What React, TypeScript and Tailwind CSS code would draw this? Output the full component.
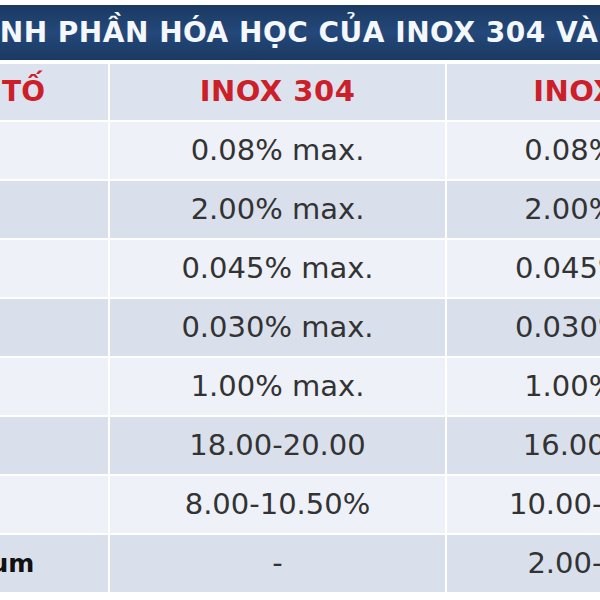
const rows = [
  { name: "Carbon", a: "0.08% max.", b: "0.08% max." },
  { name: "Mangan", a: "2.00% max.", b: "2.00% max." },
  { name: "Photpho", a: "0.045% max.", b: "0.045% max." },
  { name: "Lưu huỳnh", a: "0.030% max.", b: "0.030% max." },
  { name: "Silic", a: "1.00% max.", b: "1.00% max." },
  { name: "Crom", a: "18.00-20.00", b: "16.00-18.00" },
  { name: "Niken", a: "8.00-10.50%", b: "10.00-14.00%" },
  { name: "Molybdenum", a: "-", b: "2.00-3.00%" },
];

export default function App() {
  return (
    <div className="w-[600px] h-[600px] overflow-hidden bg-white font-['DejaVu_Sans',sans-serif]">
      <div className="pt-[5px] -ml-[160px] w-[935px]">
        <div className="h-[55px] flex items-center pl-[94px] bg-gradient-to-b from-[#1a3962] via-[#24487a] to-[#1a3962]">
          <span className="text-[#f4f7fc] font-bold text-[28px] whitespace-nowrap tracking-[0.5px]">
            THÀNH PHẦN HÓA HỌC CỦA INOX 304 VÀ 316
          </span>
        </div>
        <div className="h-[4px] bg-white" />
        <div className="grid grid-cols-[268px_337px_330px]">
          <div className="h-[58px] bg-[#dde3ee] border-b-2 border-white flex items-center justify-end pr-[63px] text-[28px] font-bold text-[#cc1f2a] whitespace-nowrap">
            NGUYÊN TỐ
          </div>
          <div className="h-[58px] bg-[#dde3ee] border-b-2 border-l-2 border-white flex items-center justify-center text-[29px] font-bold text-[#cc1f2a] tracking-[0.5px]">
            INOX 304
          </div>
          <div className="h-[58px] bg-[#dde3ee] border-b-2 border-l-2 border-white flex items-center justify-center text-[29px] font-bold text-[#cc1f2a] tracking-[0.5px]">
            INOX 316
          </div>
          {rows.map((r, i) => {
            const bg = i % 2 === 0 ? "bg-[#eef1f8]" : "bg-[#d9e0ec]";
            return [
              <div
                key={r.name}
                className={`h-[59px] ${bg} border-b-2 border-white flex items-center pl-[13px] text-[25px] font-bold text-[#111] whitespace-nowrap`}
              >
                {r.name}
              </div>,
              <div
                key={r.name + "a"}
                className={`h-[59px] ${bg} border-b-2 border-l-2 border-white flex items-center justify-center text-[29px] text-[#333] whitespace-nowrap`}
              >
                {r.a}
              </div>,
              <div
                key={r.name + "b"}
                className={`h-[59px] ${bg} border-b-2 border-l-2 border-white flex items-center justify-center text-[29px] text-[#333] whitespace-nowrap`}
              >
                {r.b}
              </div>,
            ];
          })}
        </div>
      </div>
    </div>
  );
}
